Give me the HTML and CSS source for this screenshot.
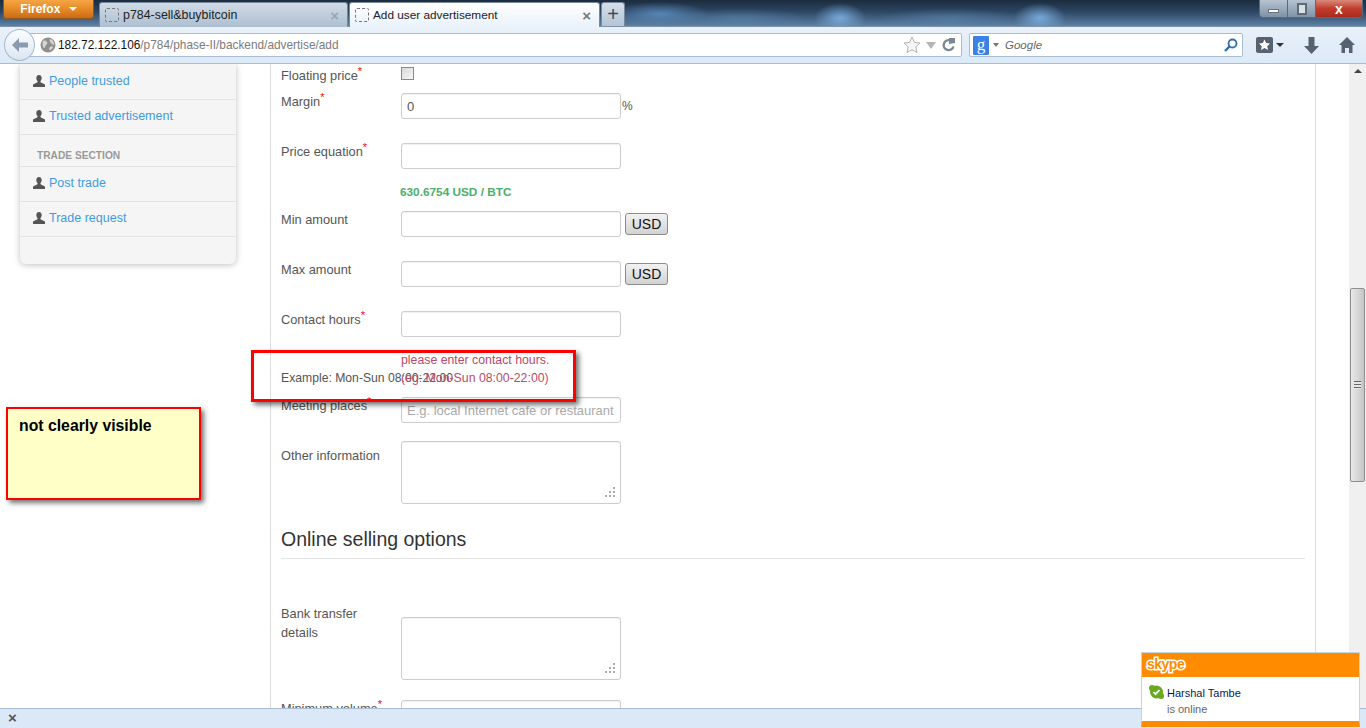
FILE: index.html
```html
<!DOCTYPE html>
<html lang="en">
<head>
    <meta charset="UTF-8">
    <title>Add user advertisement</title>
    <link rel="stylesheet" href="styles.css">
</head>
<body>
    <svg class="defs" width="0" height="0">
        <symbol id="person" viewBox="0 0 12 12">
            <path d="M3.300 3C3.300 1.200 4.500 0 6 0s2.700 1.200 2.700 3c0 1.200-.6 2.300-1.200 3v1.200L12 9.400V12H0V9.400l4.500-2.200V6c-.6-.7-1.200-1.800-1.200-3z" fill="#555"/>
        </symbol>
    </svg>

    <div class="titlebar">
        <div class="firefox-btn">Firefox <span class="caret"></span></div>
        <div class="tab">
            <span class="favicon"></span>
            <span class="tab-title">p784-sell&amp;buybitcoin</span>
            <span class="tab-close">×</span>
        </div>
        <div class="tab active">
            <span class="favicon"></span>
            <span class="tab-title">Add user advertisement</span>
            <span class="tab-close">×</span>
        </div>
        <div class="new-tab">+</div>
        <div class="win-controls">
            <div class="win-btn"><span class="win-min"></span></div>
            <div class="win-btn"><span class="win-max"></span></div>
            <div class="win-btn close">x</div>
        </div>
    </div>

    <div class="navbar">
        <div class="back-btn">
            <svg width="18" height="16" viewBox="0 0 18 16"><path d="M8 1 1 8l7 7v-4.500h9v-5H8z" fill="#8a9bae"/></svg>
        </div>
        <div class="urlbar">
            <svg class="globe" width="16" height="16" viewBox="0 0 16 16">
                <circle cx="8" cy="8" r="7.500" fill="#8f8f8f"/>
                <path d="M3 4c2-1 3 0 4 1s0 2-1 3-1 3-2 3-2-4-1-7zM10 2c2 0 4 3 4 5s-2 0-3-1-2-3-1-4zM10 10c1-1 3-1 3 0s-2 3-3 3-1-2 0-3z" fill="#d6d6d6"/>
            </svg>
            <span class="url"><span class="url-host">182.72.122.106</span>/p784/phase-II/backend/advertise/add</span>
            <svg class="url-star" width="18" height="18" viewBox="0 0 18 18"><path d="m9 1 2.400 5.400 5.600.6-4.200 3.800 1.200 5.700L9 13.700l-5 2.800 1.200-5.700L1 7l5.600-.6z" fill="#f6f6f6" stroke="#b4b4b4"/></svg>
            <span class="url-drop"></span>
            <svg class="url-reload" width="14" height="14" viewBox="0 0 14 14"><path d="M11.500 8.500A5 5 0 1 1 8 2.300" fill="none" stroke="#7b8794" stroke-width="2.400"/><path d="M7 0v6l6-1V0z" fill="#7b8794"/></svg>
        </div>
        <div class="searchbar">
            <span class="g-tile">g</span>
            <span class="search-drop"></span>
            <span class="search-hint">Google</span>
            <svg class="search-icon" width="15" height="15" viewBox="0 0 15 15"><circle cx="9.500" cy="5.500" r="4" fill="none" stroke="#2f6fa8" stroke-width="1.800"/><path d="M6.500 8.500 2 13" stroke="#2f6fa8" stroke-width="2.400"/></svg>
        </div>
        <div class="nav-icons">
            <div class="bookmarks">
                <svg width="17" height="16" viewBox="0 0 17 16"><rect width="17" height="16" rx="2" fill="#566270"/><path d="m8.500 2.500 1.700 3.600 3.800.5-2.800 2.600.8 3.800-3.500-2-3.500 2 .8-3.800L3 6.600l3.800-.5z" fill="#fff"/></svg>
                <span class="caret dark"></span>
            </div>
            <svg class="nav-down" width="15" height="17" viewBox="0 0 15 17"><path d="M4.500 0h6v9H15l-7.500 8L0 9h4.500z" fill="#566270"/></svg>
            <svg class="nav-home" width="16" height="16" viewBox="0 0 16 16"><path d="M8 0 0 8h2.500v8H6v-5h4v5h3.500V8H16z" fill="#566270"/></svg>
        </div>
    </div>

    <div class="page">
        <aside class="sidebar">
            <a class="side-item"><svg width="12" height="12"><use href="#person"/></svg>People trusted</a>
            <a class="side-item"><svg width="12" height="12"><use href="#person"/></svg>Trusted advertisement</a>
            <div class="side-title">TRADE SECTION</div>
            <a class="side-item"><svg width="12" height="12"><use href="#person"/></svg>Post trade</a>
            <a class="side-item"><svg width="12" height="12"><use href="#person"/></svg>Trade request</a>
        </aside>

        <main class="panel">
            <div class="row row-check">
                <label class="field-label">Floating price<sup>*</sup></label>
                <input type="checkbox" class="check">
            </div>
            <div class="row">
                <label class="field-label">Margin<sup>*</sup></label>
                <input type="text" class="text-input" value="0">
                <span class="unit">%</span>
            </div>
            <div class="row row-tight">
                <label class="field-label">Price equation<sup>*</sup></label>
                <input type="text" class="text-input">
            </div>
            <div class="price-note">630.6754 USD / BTC</div>
            <div class="row">
                <label class="field-label">Min amount</label>
                <input type="text" class="text-input">
                <button class="currency-btn">USD</button>
            </div>
            <div class="row">
                <label class="field-label">Max amount</label>
                <input type="text" class="text-input">
                <button class="currency-btn">USD</button>
            </div>
            <div class="row row-tight">
                <label class="field-label">Contact hours<sup>*</sup></label>
                <input type="text" class="text-input">
            </div>
            <div class="row row-hint">
                <div class="hint">Example: Mon-Sun 08:00-22:00</div>
                <div class="error">please enter contact hours.<br>(eg: Mon-Sun 08:00-22:00)</div>
            </div>
            <div class="row row-meeting">
                <label class="field-label">Meeting places<sup>*</sup></label>
                <input type="text" class="text-input" placeholder="E.g. local Internet cafe or restaurant">
            </div>
            <div class="row">
                <label class="field-label low">Other information</label>
                <div class="area"><span class="grip"></span></div>
            </div>
            <h2 class="section-head">Online selling options</h2>
            <div class="row row-bank">
                <label class="field-label high">Bank transfer details</label>
                <div class="area"><span class="grip"></span></div>
            </div>
            <div class="row">
                <label class="field-label">Minimum volume<sup>*</sup></label>
                <input type="text" class="text-input" value="0">
            </div>
        </main>

        <div class="scrollbar">
            <span class="scroll-up"></span>
            <div class="scroll-thumb"><span class="scroll-grip"></span></div>
        </div>

        <div class="mark-box"></div>
        <div class="sticky-note">not clearly visible</div>
    </div>

    <div class="statusbar"><span class="status-x">×</span></div>

    <div class="skype-pop">
        <div class="skype-head"><span class="skype-logo">skype</span></div>
        <div class="skype-body">
            <svg class="skype-status" width="15" height="14" viewBox="0 0 15 14">
                <circle cx="7.500" cy="7" r="6.500" fill="#6aa81e"/>
                <circle cx="3" cy="3" r="3" fill="#6aa81e"/>
                <circle cx="12" cy="11" r="3" fill="#6aa81e"/>
                <path d="m4.500 7 2 2.200 4-4.200" fill="none" stroke="#fff" stroke-width="1.800"/>
            </svg>
            <div class="skype-name">Harshal Tambe</div>
            <div class="skype-state">is online</div>
        </div>
    </div>
</body>
</html>
```

FILE: styles.css
```css
* {
    box-sizing: border-box;
}
html, body {
    margin: 0;
    height: 728px;
    overflow: hidden;
}
body {
    position: relative;
    display: flex;
    flex-direction: column;
    font-family: "Liberation Sans", Arial, sans-serif;
    background: #fff;
}
.defs {
    position: absolute;
}

/* window title and tabs */
.titlebar {
    height: 27px;
    flex: none;
    display: flex;
    align-items: flex-end;
    padding-left: 3px;
    border-bottom: 1px solid #7f93a8;
    background:
        radial-gradient(ellipse 26px 15px at 840px 18px, rgba(125, 175, 225, .9), transparent),
        radial-gradient(ellipse 26px 15px at 1040px 18px, rgba(125, 175, 225, .9), transparent),
        radial-gradient(ellipse 50px 12px at 660px 14px, rgba(95, 147, 198, .8), transparent),
        radial-gradient(ellipse 70px 10px at 740px 18px, rgba(95, 140, 185, .5), transparent),
        radial-gradient(ellipse 70px 10px at 950px 18px, rgba(95, 140, 185, .5), transparent),
        linear-gradient(#1c2c3e, #2c4662 45%, #5d82a6);
}
.firefox-btn {
    align-self: flex-start;
    width: 91px;
    height: 19px;
    margin-right: 5px;
    color: #fff;
    font-size: 12px;
    font-weight: bold;
    line-height: 18px;
    text-align: center;
    background: linear-gradient(#f6a545, #e58a26 50%, #cf6a14);
    border: 1px solid #8a5a24;
    border-top: 0;
    border-radius: 0 0 3px 3px;
}
.caret {
    display: inline-block;
    margin-left: 5px;
    vertical-align: 2px;
    border: 4px solid transparent;
    border-top: 4px solid #fff;
    border-bottom: 0;
}
.caret.dark {
    border-top-color: #333;
}
.tab {
    width: 249px;
    height: 25px;
    margin-right: 1px;
    margin-bottom: -1px;
    padding: 0 8px 0 5px;
    display: flex;
    align-items: center;
    font-size: 12.400px;
    color: #222;
    background: linear-gradient(#cfdbe7, #aebfd0);
    border: 1px solid #78899b;
    border-bottom: 0;
    border-radius: 3px 3px 0 0;
}
.tab.active {
    width: 251px;
    font-size: 11.800px;
    background: linear-gradient(#fff, #eaf2fb);
}
.favicon {
    width: 14px;
    height: 14px;
    margin-right: 4px;
    border: 1px dashed #777;
    border-radius: 2px;
}
.tab-title {
    flex: 1;
}
.tab-close {
    font-size: 15px;
    font-weight: bold;
    color: #9aa6b2;
}
.active .tab-close {
    color: #777;
}
.new-tab {
    width: 24px;
    height: 24px;
    font-size: 20px;
    line-height: 23px;
    text-align: center;
    color: #3c4a58;
    background: linear-gradient(#d3dee9, #b4c5d6);
    border: 1px solid #78899b;
    border-bottom: 0;
    border-radius: 3px 3px 0 0;
}
.win-controls {
    align-self: flex-start;
    margin-left: auto;
    margin-right: 3px;
    height: 18px;
    display: flex;
    border: 1px solid #5b6a7a;
    border-top: 0;
    border-radius: 0 0 4px 4px;
    overflow: hidden;
}
.win-btn {
    width: 28px;
    display: flex;
    align-items: center;
    justify-content: center;
    border-right: 1px solid #5b6a7a;
    background: linear-gradient(#b6c4d3, #7f92a6);
}
.win-btn.close {
    width: 46px;
    border-right: 0;
    color: #fff;
    font-size: 14px;
    font-weight: bold;
    line-height: 14px;
    background: linear-gradient(#d98a7c, #c23c2c 50%, #a82c1e);
}
.win-min {
    width: 11px;
    height: 4px;
    margin-top: 4px;
    background: #fff;
    border: 1px solid #66717d;
}
.win-max {
    width: 10px;
    height: 12px;
    background: #d8e0e8;
    border: 2px solid #5f6a76;
}

/* navigation toolbar */
.navbar {
    height: 37px;
    flex: none;
    position: relative;
    display: flex;
    align-items: center;
    padding-left: 20px;
    background: linear-gradient(#e9f1fa, #dce9f7);
    border-bottom: 1px solid #a8bdd3;
}
.back-btn {
    position: absolute;
    left: 4px;
    top: 2px;
    z-index: 1;
    width: 31px;
    height: 32px;
    display: flex;
    align-items: center;
    justify-content: center;
    border: 1px solid #a9b9ca;
    border-radius: 50%;
    background: linear-gradient(#fbfdff, #dbe6f2);
}
.urlbar, .searchbar {
    height: 24px;
    display: flex;
    align-items: center;
    background: #fff;
    border: 1px solid #a9bdd2;
    border-radius: 2px;
}
.urlbar {
    width: 942px;
    padding-left: 19px;
    padding-right: 4px;
}
.globe {
    margin-right: 2px;
}
.url {
    flex: 1;
    font-size: 11.850px;
    color: #7b7b7b;
}
.url-host {
    color: #111;
}
.url-star {
    margin-right: 5px;
}
.url-drop {
    margin-right: 6px;
    border: 5px solid transparent;
    border-top: 7px solid #b4b4b4;
    border-bottom: 0;
}
.url-reload {
    margin-right: 1px;
}
.searchbar {
    width: 274px;
    margin-left: 7px;
    padding: 0 4px 0 3px;
}
.g-tile {
    width: 16px;
    height: 19px;
    text-align: center;
    font: 17px/17px "Liberation Serif", serif;
    color: #fff;
    background: #3b82e6;
    border-radius: 1px;
}
.search-drop {
    margin: 0 6px 0 4px;
    border: 3px solid transparent;
    border-top: 4px solid #777;
    border-bottom: 0;
}
.search-hint {
    flex: 1;
    font-size: 11.500px;
    font-style: italic;
    color: #666;
}
.nav-icons {
    display: flex;
    align-items: center;
    padding-left: 13px;
}
.bookmarks {
    display: flex;
    align-items: center;
    width: 48px;
}
.bookmarks .caret {
    margin-left: 3px;
}
.nav-down {
    margin-right: 20px;
}

/* page content */
.page {
    flex: 1;
    min-height: 0;
    position: relative;
    display: flex;
    align-items: flex-start;
    overflow: hidden;
}
.sidebar {
    flex: none;
    width: 216px;
    height: 200px;
    margin-left: 20px;
    padding-top: 1px;
    background: #f5f5f5;
    border-radius: 0 0 6px 6px;
    box-shadow: 0 1px 6px rgba(0, 0, 0, .25);
}
.side-item {
    height: 35px;
    padding: 0 0 2px 13px;
    display: flex;
    align-items: center;
    gap: 4px;
    font-size: 12.500px;
    color: #429be0;
    border-bottom: 1px solid #e2e2e2;
}
.side-title {
    height: 32px;
    padding: 15px 0 0 17px;
    font-size: 10.200px;
    font-weight: bold;
    line-height: 12px;
    color: #999;
    border-bottom: 1px solid #e2e2e2;
}
.panel {
    flex: none;
    width: 1046px;
    height: 700px;
    margin-left: 34px;
    padding: 3px 10px 0;
    border-left: 1px solid #ddd;
    border-right: 1px solid #ddd;
}
.row {
    display: flex;
    align-items: center;
    margin-bottom: 24px;
}
.row-check {
    height: 13px;
    margin-bottom: 13px;
}
.row-tight {
    margin-bottom: 14px;
}
.row-hint {
    height: 36px;
    margin-bottom: 10px;
    align-items: flex-start;
}
.row-meeting {
    margin-bottom: 18px;
}
.row-bank {
    margin-bottom: 20px;
}
.field-label {
    flex: none;
    align-self: flex-start;
    width: 120px;
    margin-top: -1px;
    font-size: 12.800px;
    line-height: 19px;
    color: #555;
}
.field-label.low {
    margin-top: 5px;
}
.field-label.high {
    margin-top: -13px;
    padding-right: 30px;
}
.field-label sup {
    font-size: 11px;
    line-height: 0;
    color: #f00;
}
.check {
    appearance: none;
    width: 13px;
    height: 13px;
    margin: 0;
    background: linear-gradient(135deg, #d8d8d8, #f8f8f8);
    border: 1px solid #8a8a8a;
}
.text-input {
    width: 220px;
    height: 26px;
    padding: 0 5px;
    font: 13px "Liberation Sans", Arial, sans-serif;
    color: #555;
    background: #fff;
    border: 1px solid #ccc;
    border-radius: 3px;
    box-shadow: inset 0 1px 1px rgba(0, 0, 0, .06);
}
.text-input::placeholder {
    color: #aaa;
}
.unit {
    margin-left: 1px;
    font-size: 12px;
    color: #555;
}
.currency-btn {
    width: 43px;
    height: 22px;
    margin-left: 4px;
    padding: 0;
    font: 14px "Liberation Sans", Arial, sans-serif;
    color: #111;
    background: linear-gradient(#f2f2f2, #d2d2d2);
    border: 1px solid #8c8c8c;
    border-radius: 3px;
}
.price-note {
    height: 18px;
    margin-bottom: 10px;
    padding-left: 119px;
    font-size: 11.800px;
    font-weight: bold;
    line-height: 18px;
    color: #4cae6c;
}
.hint {
    flex: none;
    width: 120px;
    margin-top: 18px;
    font-size: 12.200px;
    line-height: 18px;
    white-space: nowrap;
    color: #555;
}
.error {
    font-size: 12.300px;
    line-height: 18px;
    white-space: nowrap;
    color: #b94a6a;
}
.area {
    position: relative;
    width: 220px;
    height: 63px;
    background: #fff;
    border: 1px solid #ccc;
    border-radius: 3px;
    box-shadow: inset 0 1px 1px rgba(0, 0, 0, .06);
}
.grip {
    position: absolute;
    right: 5px;
    bottom: 6px;
    width: 2px;
    height: 2px;
    background: #aaa;
    box-shadow: -4px 0 #aaa, -8px 0 #aaa, 0 -4px #aaa, -4px -4px #aaa, 0 -8px #aaa;
}
.section-head {
    height: 31px;
    margin: 0 0 58px;
    font-size: 19.500px;
    font-weight: normal;
    line-height: 22px;
    color: #333;
    border-bottom: 1px solid #e5e5e5;
}

/* scrollbar */
.scrollbar {
    flex: none;
    width: 17px;
    height: 644px;
    margin-left: auto;
    padding-top: 5px;
    display: flex;
    flex-direction: column;
    align-items: center;
    background: #f0f0f0;
}
.scroll-up {
    flex: none;
    margin-bottom: 215px;
    border: 4px solid transparent;
    border-bottom: 4px solid #444;
    border-top: 0;
}
.scroll-thumb {
    flex: none;
    width: 15px;
    height: 194px;
    display: flex;
    align-items: center;
    justify-content: center;
    background: linear-gradient(90deg, #e8e8e8, #d8d8d8 50%, #c4c4c4);
    border: 1px solid #8f8f8f;
    border-radius: 2px;
}
.scroll-grip {
    width: 7px;
    height: 8px;
    background: repeating-linear-gradient(#666 0 1px, #e8e8e8 1px 3px);
}

/* review annotations, they lie over the page */
.mark-box {
    position: absolute;
    left: 251px;
    top: 286px;
    width: 325px;
    height: 52px;
    border: 3px solid #f00;
    box-shadow: 3px 3px 5px rgba(0, 0, 0, .55);
}
.sticky-note {
    position: absolute;
    left: 6px;
    top: 343px;
    width: 195px;
    height: 93px;
    padding: 7px 11px;
    font-size: 15.800px;
    font-weight: bold;
    line-height: 20px;
    color: #000;
    background: #ffffc8;
    border: 2px solid #f00;
    box-shadow: 3px 3px 5px rgba(0, 0, 0, .55);
}

.statusbar {
    height: 20px;
    flex: none;
    padding-left: 8px;
    background: #dbe8f7;
    border-top: 1px solid #a9bcd0;
}
.status-x {
    font-size: 15px;
    font-weight: bold;
    line-height: 18px;
    color: #555;
}

/* skype toast */
.skype-pop {
    position: absolute;
    right: 6px;
    bottom: 1px;
    width: 219px;
    height: 75px;
    background: #fff;
    border: 1px solid #c9d3dc;
    border-bottom: 6px solid #ff8c00;
}
.skype-head {
    height: 24px;
    padding: 3px 0 0 5px;
    background: #ff8c00;
}
.skype-logo {
    display: block;
    font-size: 14px;
    font-weight: bold;
    line-height: 16px;
    letter-spacing: -.5px;
    color: #ff8c00;
    -webkit-text-stroke: 3px #fff;
    paint-order: stroke fill;
}
.skype-body {
    position: relative;
    padding: 8px 0 0 25px;
    font-size: 11px;
    line-height: 16px;
}
.skype-status {
    position: absolute;
    left: 7px;
    top: 8px;
}
.skype-name {
    color: #0c1b4d;
}
.skype-state {
    color: #666;
}
```
